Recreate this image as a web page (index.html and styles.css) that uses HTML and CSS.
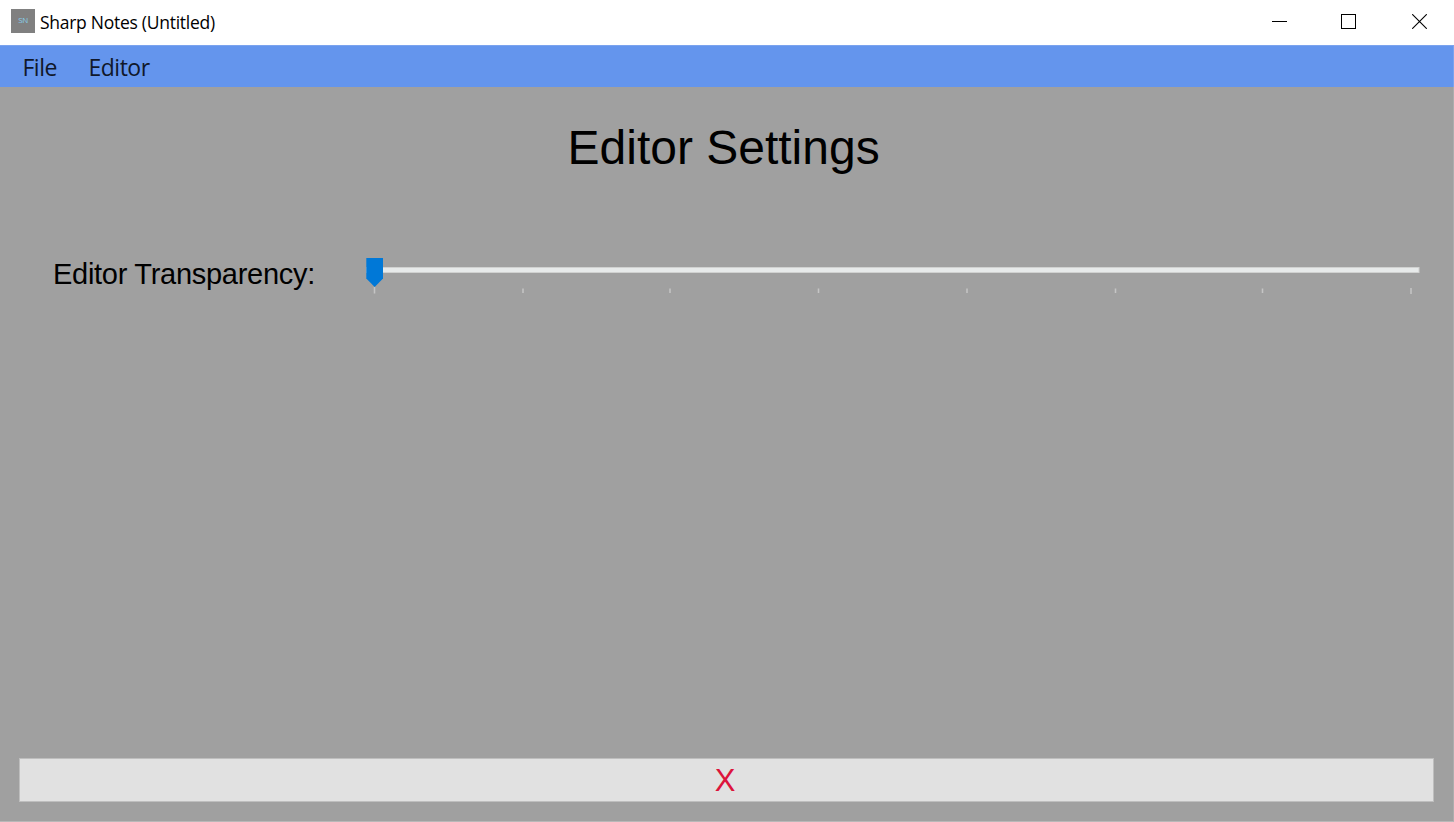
FILE: index.html
```html
<!DOCTYPE html>
<html lang="en">
<head>
<meta charset="utf-8">
<title>Sharp Notes (Untitled)</title>
<link rel="stylesheet" href="styles.css">
</head>
<body>
<div class="window">
  <header class="titlebar">
    <span class="app-icon">SN</span>
    <span class="caption">Sharp Notes (Untitled)</span>
    <div class="controls">
      <svg class="minimize" width="15" height="15" viewBox="0 0 15 15" shape-rendering="crispEdges"><path d="M0 7.5h15" stroke="#000"/></svg>
      <svg class="maximize" width="15" height="15" viewBox="0 0 15 15" shape-rendering="crispEdges"><path d="M.5 .5h14v14h-14z" fill="none" stroke="#000"/></svg>
      <svg class="close" width="15" height="15" viewBox="0 0 15 15"><path d="M.2 .2l14.6 14.6M14.8 .2L.2 14.8" stroke="#000" stroke-width="1.1"/></svg>
    </div>
  </header>
  <nav class="menubar">
    <span class="menu-item file">File</span>
    <span class="menu-item editor">Editor</span>
  </nav>
  <main class="settings">
    <h1 class="heading">Editor Settings</h1>
    <div class="setting">
      <span class="label">Editor Transparency:</span>
      <svg class="slider" width="1056" height="40" viewBox="0 0 1056 40">
        <rect x="1" y="9" width="1053.500" height="6" fill="#d0d1d0"/>
        <rect x="2" y="10" width="1051.500" height="4" fill="#e7eaea"/>
        <path d="M9.500 29v6.500M158 30.500v4.500M305 30.500v4.500M453.500 30.500v4.500M602 30.500v4.500M750.500 30.500v4.500M897.500 30.500v4.500M1046 30v6" stroke="#c5c5c5" stroke-width="1.500"/>
        <path d="M1.300 0h16.700v20.500L9.700 29 1.300 20.500z" fill="#0078d7"/>
      </svg>
    </div>
    <button class="close-settings">X</button>
  </main>
</div>
</body>
</html>
```
FILE: styles.css
```css
* { box-sizing: border-box; }
body { margin: 0; }
.window {
  width: 1454px;
  height: 822px;
  display: flex;
  flex-direction: column;
  background: #a0a0a0;
  overflow: hidden;
}
.titlebar {
  height: 45px;
  display: flex;
  align-items: center;
  padding: 0 27px 2px 11px;
  background: #fff;
  font-family: "Open Sans", "Noto Sans", sans-serif;
}
.app-icon {
  width: 24px;
  height: 24px;
  margin-top: -1px;
  background: #808080;
  color: #87ceeb;
  font-size: 8px;
  letter-spacing: -0.4px;
  line-height: 22px;
  text-align: center;
}
.caption {
  margin: 0 0 0 5px;
  font-size: 17.500px;
  letter-spacing: -0.270px;
  line-height: 24px;
  color: #000;
  white-space: nowrap;
}
.controls { display: flex; margin-left: auto; }
.maximize { margin-left: 54px; }
.close { margin-left: 56px; }
.menubar {
  height: 42px;
  display: flex;
  padding-left: 22.500px;
  border-top: 1px solid #7ba3ee;
  border-right: 1px solid #7ba3ee;
  background: #6495ed;
  font-family: "Open Sans", "Noto Sans", sans-serif;
  font-size: 23px;
  letter-spacing: -0.5px;
  line-height: 42px;
  color: #10182a;
}
.file { width: 66px; }
.settings {
  flex: 1;
  display: flex;
  flex-direction: column;
  border-right: 1px solid #adadad;
  border-bottom: 1px solid #b8b8b8;
  padding: 33px 19px 19px 0;
  font-family: "Liberation Sans", Arial, sans-serif;
}
.heading {
  margin: 0 0 0 567.500px;
  font-size: 48px;
  font-weight: 400;
  line-height: 56px;
  color: #000;
  white-space: nowrap;
}
.setting { display: flex; margin: 82px 0 0 53px; }
.label {
  width: 312px;
  font-size: 29px;
  letter-spacing: -0.280px;
  line-height: 32px;
  color: #000;
  white-space: nowrap;
}
.slider { flex: none; }
.close-settings {
  height: 44px;
  margin: auto 0 0 19px;
  padding: 2px 3px 0 0;
  border: 1px solid #bebebe;
  border-radius: 0;
  background: #e1e1e1;
  color: #dc143c;
  font-family: "Liberation Sans", Arial, sans-serif;
  font-size: 31px;
  line-height: 40px;
}
```
